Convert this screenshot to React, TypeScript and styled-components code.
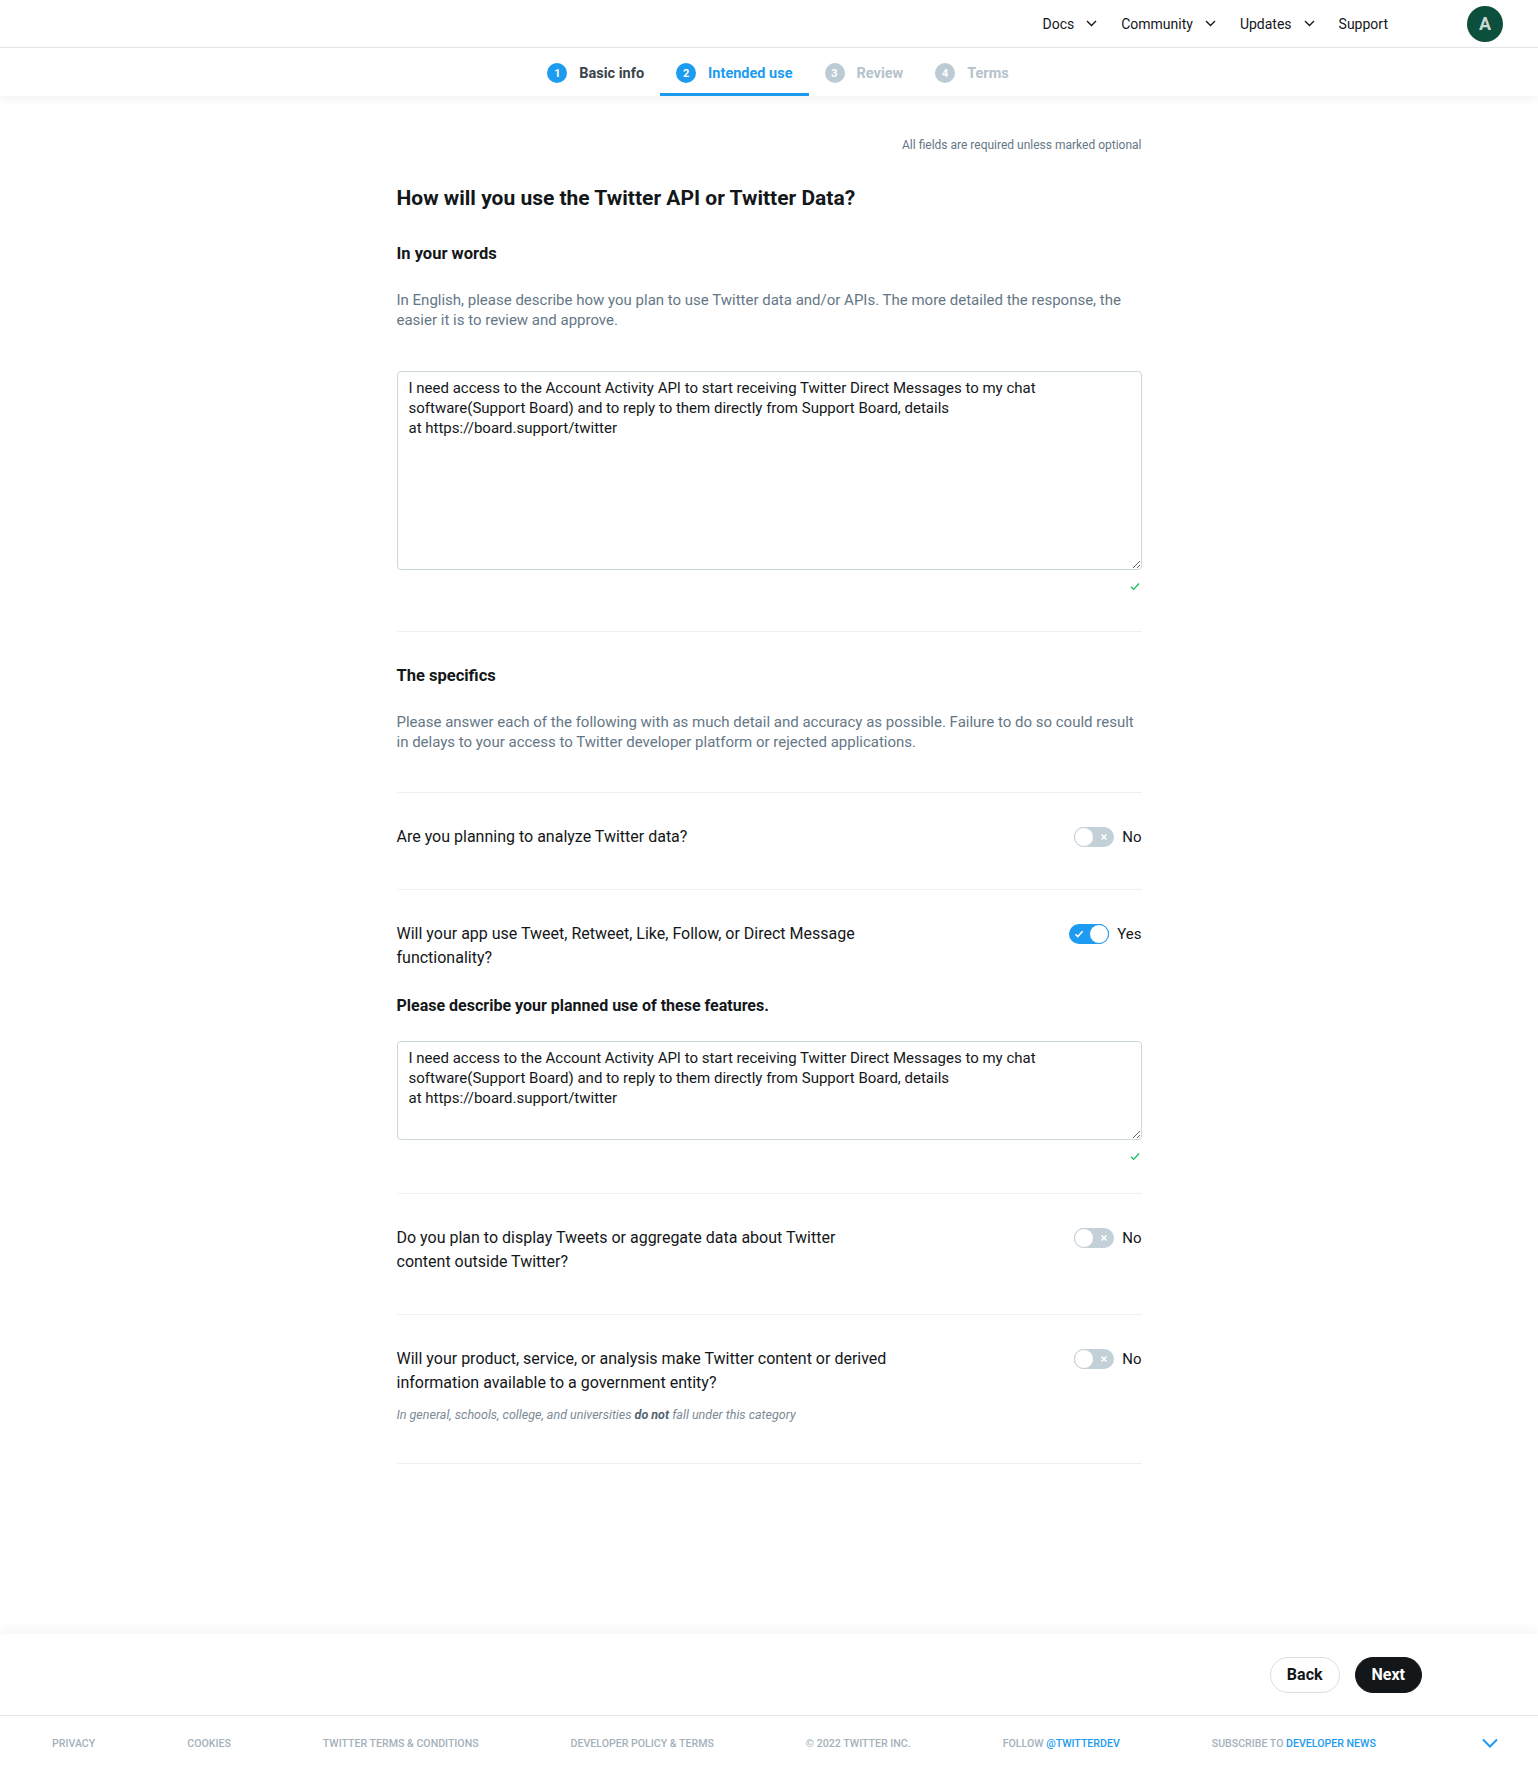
import React from "react";
import styled, { createGlobalStyle } from "styled-components";

const GlobalStyle = createGlobalStyle`
  html, body { margin: 0; padding: 0; background: #ffffff; }
  body {
    font-family: Roboto, "Liberation Sans", Arial, sans-serif;
    color: #14171a;
    -webkit-font-smoothing: antialiased;
  }
  * { box-sizing: border-box; }
`;

const Page = styled.div`
  display: flex;
  flex-direction: column;
  min-height: 1769px;
`;

/* ---------- Header ---------- */
const Header = styled.header`
  height: 48px;
  border-bottom: 1px solid #e1e8ed;
  display: flex;
  align-items: center;
  justify-content: flex-end;
  padding-right: 35px;
`;

const Nav = styled.nav`
  display: flex;
  align-items: center;
  gap: 24px;
  margin-right: 79px;
`;

const NavItem = styled.a`
  display: flex;
  align-items: center;
  gap: 12px;
  font-size: 14px;
  color: #14171a;
  text-decoration: none;
  cursor: pointer;
`;

const Avatar = styled.div`
  width: 36px;
  height: 36px;
  border-radius: 50%;
  background: #0b4f3c;
  color: #c9d8d2;
  display: flex;
  align-items: center;
  justify-content: center;
  font-size: 18px;
  font-weight: 700;
`;

const Chevron = () => (
  <svg width="11" height="7" viewBox="0 0 11 7" fill="none">
    <path d="M1 1l4.5 4.5L10 1" stroke="#14171a" strokeWidth="1.4" />
  </svg>
);

/* ---------- Stepper ---------- */
type StepState = "done" | "active" | "todo";

const Stepper = styled.div`
  height: 48px;
  display: flex;
  justify-content: center;
  align-items: stretch;
  padding-left: 18px;
  box-shadow: 0 4px 8px rgba(20, 40, 80, 0.05);
  position: relative;
  z-index: 1;
`;

const Step = styled.div<{ $state: StepState }>`
  display: flex;
  align-items: center;
  gap: 12px;
  padding: 5px 16px 0;
  border-bottom: 3px solid
    ${(p) => (p.$state === "active" ? "#1d9bf0" : "transparent")};
  font-size: 14.5px;
  font-weight: 700;
  color: ${(p) =>
    p.$state === "active" ? "#1d9bf0" : p.$state === "done" ? "#3a444c" : "#b4c2cc"};
`;

const StepNum = styled.span<{ $state: StepState }>`
  width: 20px;
  height: 20px;
  border-radius: 50%;
  background: ${(p) => (p.$state === "todo" ? "#bccad3" : "#1d9bf0")};
  color: #ffffff;
  font-size: 11px;
  font-weight: 700;
  display: flex;
  align-items: center;
  justify-content: center;
`;

/* ---------- Main ---------- */
const Main = styled.main`
  width: 745px;
  margin: 0 auto;
  padding: 41px 0 170px;
  flex: 1;
`;

const RequiredNote = styled.div`
  text-align: right;
  font-size: 12px;
  line-height: 16px;
  color: #657786;
`;

const Title = styled.h1`
  margin: 33px 0 0;
  font-size: 21px;
  line-height: 24px;
  font-weight: 700;
  color: #14171a;
`;

const SectionLabel = styled.h2<{ $mt?: number; $size?: number }>`
  margin: ${(p) => p.$mt ?? 34}px 0 0;
  font-size: ${(p) => p.$size ?? 16.5}px;
  line-height: 20px;
  font-weight: 700;
  color: #14171a;
`;

const Help = styled.p`
  margin: 26px 0 0;
  font-size: 15px;
  line-height: 20px;
  color: #657786;
`;

const TextArea = styled.textarea<{ $h: number; $mt: number }>`
  display: block;
  width: 100%;
  height: ${(p) => p.$h}px;
  margin-top: ${(p) => p.$mt}px;
  padding: 6px 11px;
  border: 1px solid #ccd6dd;
  border-radius: 4px;
  font-family: inherit;
  font-size: 15px;
  line-height: 20px;
  color: #14171a;
  resize: vertical;
  outline: none;
`;

const CheckRow = styled.div`
  display: flex;
  justify-content: flex-end;
  align-items: center;
  height: 16px;
  margin-top: 8px;
  padding-right: 2px;
`;

const Divider = styled.hr<{ $mt: number }>`
  border: none;
  border-top: 1px solid #eef1f3;
  margin: ${(p) => p.$mt}px 0 0;
`;

const QuestionBlock = styled.section<{ $pb?: number }>`
  padding: 32px 0 ${(p) => p.$pb ?? 40}px;
  border-bottom: 1px solid #eef1f3;
`;

const QuestionRow = styled.div`
  display: flex;
  justify-content: space-between;
  align-items: flex-start;
`;

const QuestionText = styled.div`
  max-width: 493px;
  font-size: 16px;
  line-height: 24px;
  color: #14171a;
`;

const ToggleGroup = styled.div`
  display: flex;
  align-items: center;
  gap: 8px;
  height: 24px;
  font-size: 15px;
  color: #14171a;
`;

const Track = styled.span<{ $on: boolean }>`
  position: relative;
  width: 40px;
  height: 20px;
  border-radius: 10px;
  background: ${(p) => (p.$on ? "#1d9bf0" : "#c3d0d8")};
  display: inline-block;
`;

const Knob = styled.span<{ $on: boolean }>`
  position: absolute;
  top: 0;
  left: ${(p) => (p.$on ? "20px" : "0")};
  width: 20px;
  height: 20px;
  border-radius: 50%;
  background: #ffffff;
  border: 1px solid ${(p) => (p.$on ? "#1d9bf0" : "#c3d0d8")};
`;

const TrackIcon = styled.span<{ $on: boolean }>`
  position: absolute;
  top: 5px;
  left: ${(p) => (p.$on ? "5px" : "25px")};
  width: 10px;
  height: 10px;
  display: flex;
`;

const Note = styled.div`
  margin-top: 12px;
  font-size: 12.5px;
  line-height: 16px;
  font-style: italic;
  color: #7c8a96;
  b { color: #536471; font-weight: 700; }
`;

const Toggle = ({ on }: { on: boolean }) => (
  <ToggleGroup>
    <Track $on={on}>
      <TrackIcon $on={on}>
        {on ? (
          <svg width="10" height="10" viewBox="0 0 10 10" fill="none">
            <path d="M1.5 5.2l2.3 2.3L8.6 2.3" stroke="#fff" strokeWidth="1.6" />
          </svg>
        ) : (
          <svg width="10" height="10" viewBox="0 0 10 10" fill="none">
            <path d="M2.5 2.5l5 5M7.5 2.5l-5 5" stroke="#fff" strokeWidth="1.5" />
          </svg>
        )}
      </TrackIcon>
      <Knob $on={on} />
    </Track>
    <span>{on ? "Yes" : "No"}</span>
  </ToggleGroup>
);

const Check = () => (
  <svg width="10" height="9" viewBox="0 0 10 9" fill="none">
    <path d="M1 4.8l2.6 2.6L9 1.5" stroke="#17bf63" strokeWidth="1.3" />
  </svg>
);

/* ---------- Action bar & footer ---------- */
const ActionBar = styled.div`
  height: 81px;
  display: flex;
  align-items: center;
  justify-content: flex-end;
  gap: 15px;
  padding-right: 116px;
  box-shadow: 0 -6px 10px rgba(20, 40, 80, 0.035);
`;

const Button = styled.button<{ $primary?: boolean }>`
  height: 36px;
  padding: 0 16px;
  border-radius: 18px;
  font-family: inherit;
  font-size: 16px;
  font-weight: 700;
  cursor: pointer;
  border: 1px solid ${(p) => (p.$primary ? "#14171a" : "#d8e0e5")};
  background: ${(p) => (p.$primary ? "#14171a" : "#ffffff")};
  color: ${(p) => (p.$primary ? "#ffffff" : "#14171a")};
`;

const Footer = styled.footer`
  height: 55px;
  border-top: 1px solid #dfe5e9;
  display: flex;
  align-items: center;
  gap: 92px;
  padding: 0 40px 0 52px;
`;

const FooterLink = styled.a`
  font-size: 10.6px;
  font-weight: 500;
  text-transform: uppercase;
  color: #a4b1bb;
  text-decoration: none;
  white-space: nowrap;
  span { color: #1d9bf0; }
`;

const FooterChevron = styled.span`
  margin-left: auto;
  display: flex;
`;

export default function App() {
  const text =
    "I need access to the Account Activity API to start receiving Twitter Direct Messages to my chat\nsoftware(Support Board) and to reply to them directly from Support Board, details\nat https://board.support/twitter";
  return (
    <Page>
      <GlobalStyle />
      <Header>
        <Nav>
          <NavItem>Docs <Chevron /></NavItem>
          <NavItem>Community <Chevron /></NavItem>
          <NavItem>Updates <Chevron /></NavItem>
          <NavItem>Support</NavItem>
        </Nav>
        <Avatar>A</Avatar>
      </Header>

      <Stepper>
        <Step $state="done"><StepNum $state="done">1</StepNum>Basic info</Step>
        <Step $state="active"><StepNum $state="active">2</StepNum>Intended use</Step>
        <Step $state="todo"><StepNum $state="todo">3</StepNum>Review</Step>
        <Step $state="todo"><StepNum $state="todo">4</StepNum>Terms</Step>
      </Stepper>

      <Main>
        <RequiredNote>All fields are required unless marked optional</RequiredNote>
        <Title>How will you use the Twitter API or Twitter Data?</Title>
        <SectionLabel>In your words</SectionLabel>
        <Help>
          In English, please describe how you plan to use Twitter data and/or APIs. The more
          detailed the response, the easier it is to review and approve.
        </Help>
        <TextArea $h={199} $mt={41} defaultValue={text} />
        <CheckRow><Check /></CheckRow>
        <Divider $mt={37} />

        <SectionLabel>The specifics</SectionLabel>
        <Help>
          Please answer each of the following with as much detail and accuracy as possible.
          Failure to do so could result in delays to your access to Twitter developer platform
          or rejected applications.
        </Help>
        <Divider $mt={40} />

        <QuestionBlock>
          <QuestionRow>
            <QuestionText>Are you planning to analyze Twitter data?</QuestionText>
            <Toggle on={false} />
          </QuestionRow>
        </QuestionBlock>

        <QuestionBlock $pb={29}>
          <QuestionRow>
            <QuestionText>
              Will your app use Tweet, Retweet, Like, Follow, or Direct Message functionality?
            </QuestionText>
            <Toggle on />
          </QuestionRow>
          <SectionLabel $mt={26} $size={16}>
            Please describe your planned use of these features.
          </SectionLabel>
          <TextArea $h={99} $mt={25} defaultValue={text} />
          <CheckRow><Check /></CheckRow>
        </QuestionBlock>

        <QuestionBlock>
          <QuestionRow>
            <QuestionText>
              Do you plan to display Tweets or aggregate data about Twitter content outside
              Twitter?
            </QuestionText>
            <Toggle on={false} />
          </QuestionRow>
        </QuestionBlock>

        <QuestionBlock>
          <QuestionRow>
            <QuestionText>
              Will your product, service, or analysis make Twitter content or derived
              information available to a government entity?
            </QuestionText>
            <Toggle on={false} />
          </QuestionRow>
          <Note>
            In general, schools, college, and universities <b>do not</b> fall under this category
          </Note>
        </QuestionBlock>
      </Main>

      <ActionBar>
        <Button>Back</Button>
        <Button $primary>Next</Button>
      </ActionBar>

      <Footer>
        <FooterLink>Privacy</FooterLink>
        <FooterLink>Cookies</FooterLink>
        <FooterLink>Twitter Terms &amp; Conditions</FooterLink>
        <FooterLink>Developer Policy &amp; Terms</FooterLink>
        <FooterLink>© 2022 Twitter Inc.</FooterLink>
        <FooterLink>Follow <span>@TwitterDev</span></FooterLink>
        <FooterLink>Subscribe to <span>Developer News</span></FooterLink>
        <FooterChevron>
          <svg width="16" height="10" viewBox="0 0 16 10" fill="none">
            <path d="M1 1.5l7 7 7-7" stroke="#1d9bf0" strokeWidth="2" />
          </svg>
        </FooterChevron>
      </Footer>
    </Page>
  );
}
